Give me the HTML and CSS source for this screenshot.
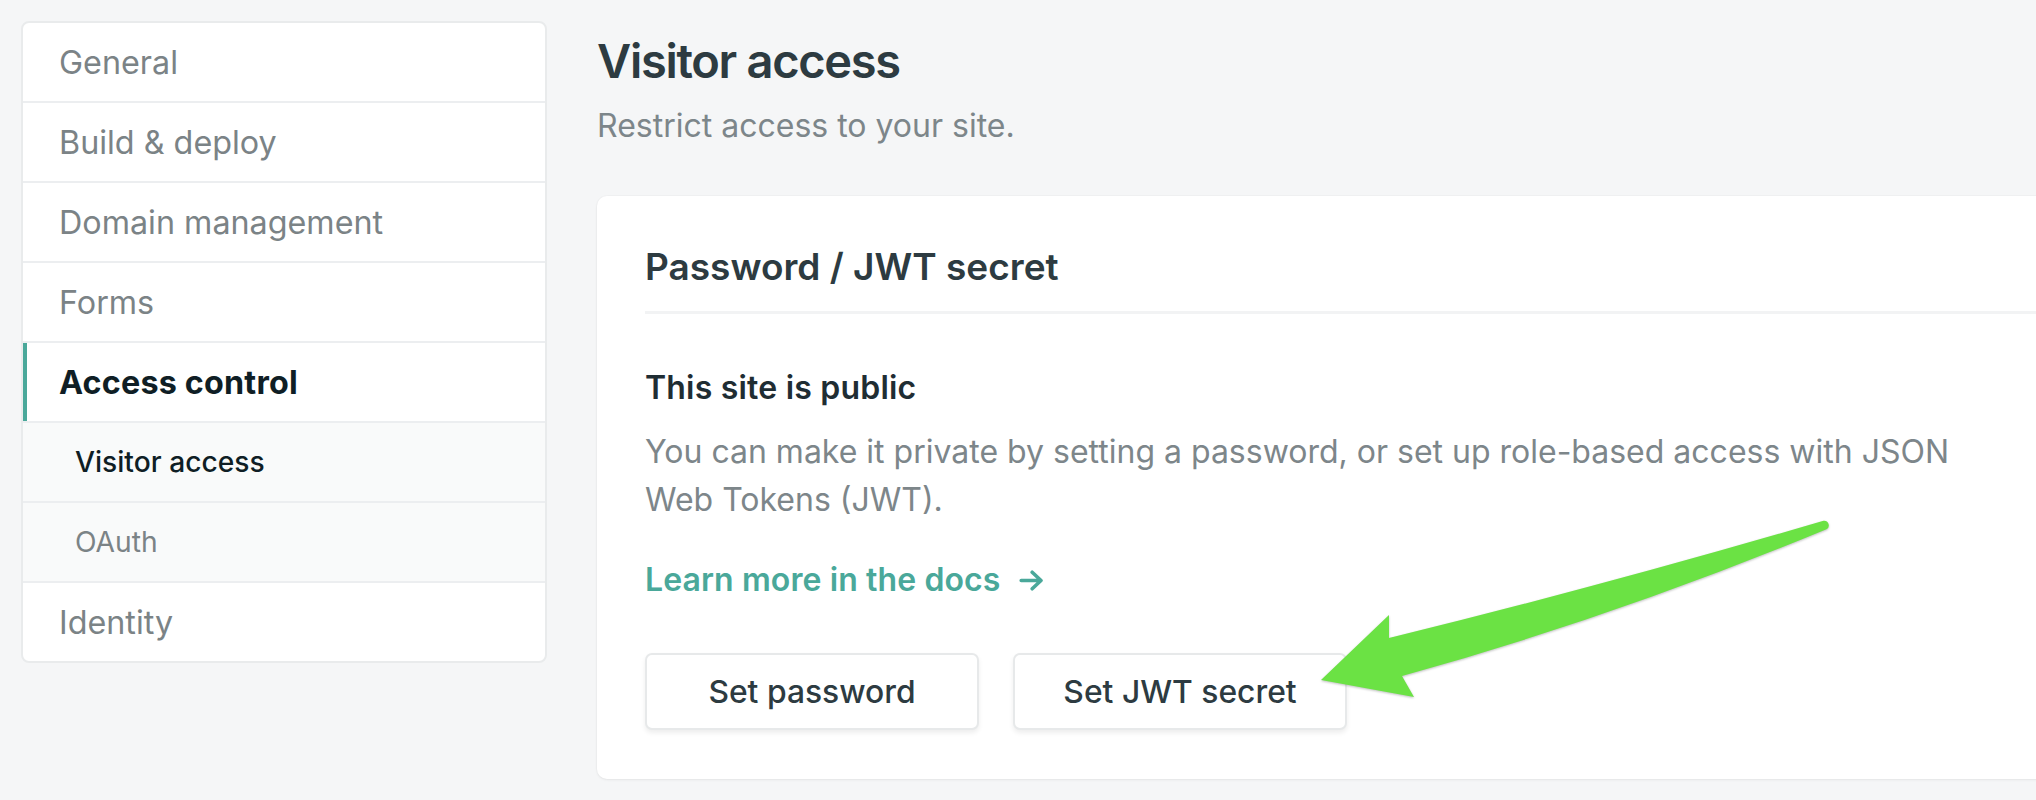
FILE: index.html
```html
<!DOCTYPE html>
<html lang="en">
<head>
<meta charset="utf-8">
<title>Visitor access</title>
<link rel="stylesheet" href="styles.css">
</head>
<body>
<div class="page">
  <nav class="sidebar">
    <a class="nav-item">General</a>
    <a class="nav-item">Build &amp; deploy</a>
    <a class="nav-item">Domain management</a>
    <a class="nav-item">Forms</a>
    <a class="nav-item active">Access control</a>
    <a class="nav-item sub current">Visitor access</a>
    <a class="nav-item sub">OAuth</a>
    <a class="nav-item">Identity</a>
  </nav>
  <main class="main">
    <h1 class="title">Visitor access</h1>
    <p class="subtitle">Restrict access to your site.</p>
    <section class="card">
      <h2 class="card-title">Password / JWT secret</h2>
      <h3 class="status">This site is public</h3>
      <p class="desc">You can make it private by setting a password, or set up role-based access with JSON Web Tokens (JWT).</p>
      <a class="docs-link">Learn more in the docs <svg class="docs-arrow" width="25" height="21" viewBox="0 0 25 21"><path d="M2.2 10.5 H22 M13.2 2.2 L22 10.5 L13.2 18.8" fill="none" stroke="currentColor" stroke-width="3.6" stroke-linecap="round" stroke-linejoin="round"/></svg></a>
      <div class="actions">
        <button class="btn">Set password</button>
        <button class="btn">Set JWT secret</button>
      </div>
    </section>
  </main>
</div>
<svg class="annotation" width="2036" height="800" viewBox="0 0 2036 800">
  <path class="annotation-arrow" d="M1823.5 520.8 Q1605 585 1389 638 L1389 615 L1321 680 L1414 697 L1402 676 Q1612 618 1826.5 529.3 A4.6 4.6 0 0 0 1823.5 520.8 Z"/>
</svg>
</body>
</html>
```

FILE: styles.css
```css
html, body {
  margin: 0;
  padding: 0;
}

body {
  width: 2036px;
  height: 800px;
  overflow: hidden;
  position: relative;
  background: #f5f6f7;
  font-family: Inter, "Noto Sans", "Liberation Sans", sans-serif;
  -webkit-font-smoothing: antialiased;
}

.page {
  display: flex;
  align-items: flex-start;
  gap: 50px;
  padding: 21px 0 0 21px;
}

/* Sidebar */
.sidebar {
  flex: 0 0 526px;
  box-sizing: border-box;
  display: flex;
  flex-direction: column;
  background: #ffffff;
  border: 2px solid #e9ebec;
  border-radius: 8px;
  overflow: hidden;
}

.nav-item {
  height: 78px;
  display: flex;
  align-items: center;
  padding-left: 36px;
  font-size: 32.3px;
  color: #7b8386;
  border-bottom: 2px solid #eceef0;
}

.nav-item:last-child {
  border-bottom: none;
}

.nav-item.active {
  font-weight: 700;
  color: #0f1e25;
  box-shadow: inset 4px 0 0 #4aa89a;
  letter-spacing: 0.2px;
}

.nav-item.sub {
  background: #f9fafa;
  padding-left: 52px;
  font-size: 28.2px;
}

.nav-item.current {
  color: #0f1e25;
  font-weight: 500;
}

/* Main */
.main {
  flex: 0 0 1520px;
  padding-top: 11px;
}

.title {
  margin: 0;
  font-size: 47px;
  line-height: 58px;
  font-weight: 600;
  color: #2d3b41;
  letter-spacing: -1.3px;
}

.subtitle {
  margin: 17px 0 0;
  font-size: 32px;
  line-height: 38px;
  color: #7d868a;
}

.card {
  margin-top: 51px;
  background: #ffffff;
  border-radius: 10px;
  box-shadow: 0 1px 3px rgba(0, 0, 0, 0.06), 0 0 0 1px rgba(0, 0, 0, 0.015);
  padding: 49px 48px 49px 48px;
}

.card-title {
  margin: 0;
  padding-bottom: 22px;
  border-bottom: 3px solid #f2f3f4;
  font-size: 37px;
  line-height: 44px;
  font-weight: 600;
  color: #2d3b41;
}

.status {
  margin: 54px 0 0;
  font-size: 32px;
  line-height: 40px;
  font-weight: 600;
  color: #1f2d33;
  letter-spacing: 0.2px;
}

.desc {
  margin: 20px 0 0;
  max-width: 1330px;
  font-size: 32px;
  line-height: 48px;
  color: #7d868a;
}

.docs-link {
  display: inline-flex;
  align-items: center;
  gap: 19px;
  margin-top: 36px;
  font-size: 32px;
  line-height: 40px;
  font-weight: 600;
  color: #4aa89a;
  letter-spacing: 0.1px;
}

.docs-arrow {
  display: block;
}

.actions {
  display: flex;
  gap: 34px;
  margin-top: 53px;
}

.btn {
  width: 334px;
  height: 77px;
  box-sizing: border-box;
  background: #ffffff;
  border: 2px solid #e7e9ea;
  border-radius: 7px;
  box-shadow: 0 3px 5px rgba(0, 0, 0, 0.07);
  font-family: inherit;
  font-size: 31.8px;
  font-weight: 500;
  color: #2d3b41;
  padding: 0;
}

/* Annotation overlay */
.annotation {
  position: absolute;
  top: 0;
  left: 0;
  pointer-events: none;
}

.annotation-arrow {
  fill: #6be244;
  filter: drop-shadow(0 1px 1px rgba(0, 0, 0, 0.25));
}
```
